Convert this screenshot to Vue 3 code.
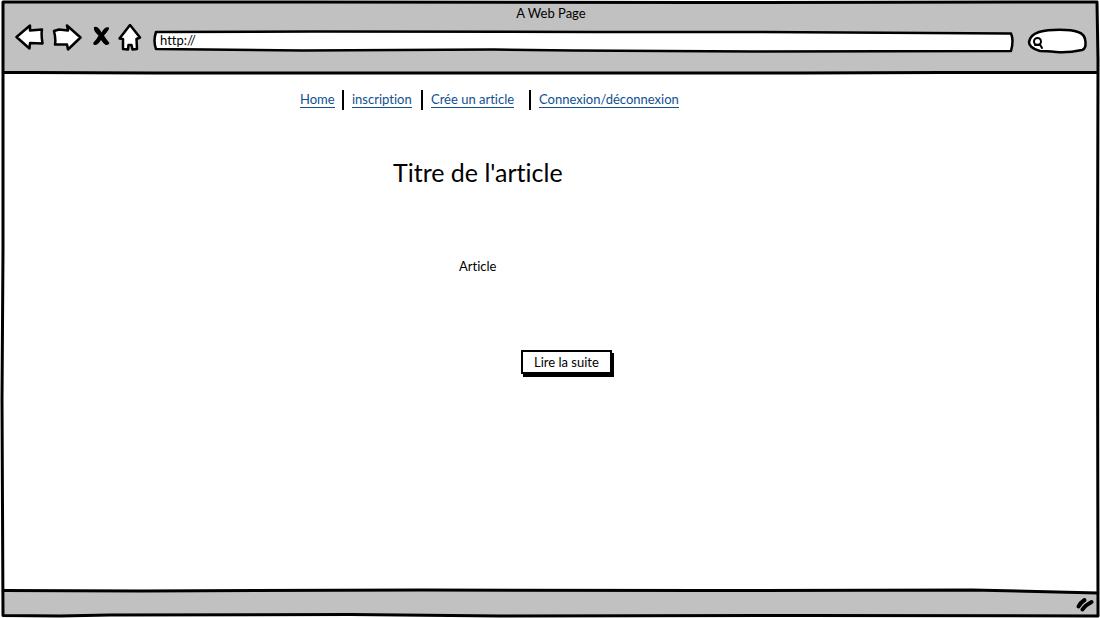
<script setup>
import { ref } from 'vue'

const address = ref('http://')
const query = ref('')
const links = ['Home', 'inscription', 'Crée un article', 'Connexion/déconnexion']
</script>

<template>
  <div class="window">
    <header class="chrome">
      <svg class="sketch" viewBox="0 0 1096 72" preserveAspectRatio="none" aria-hidden="true">
        <path d="M0 70.500 L30 70.500 L150 71 L200 71 L440 71 L600 71 L800 71 L940 70.500 L1096 70.500" />
      </svg>
      <div class="title">A Web Page</div>
      <div class="toolbar">
        <button class="tool back" type="button" aria-label="Back">
          <svg width="30" height="28" viewBox="0 0 30 28">
            <path d="M2.500 13 L16 1.500 L16 6.500 L28 5.500 Q27 10 28.500 19.500 L16 19 L15.500 24.500 Z" />
          </svg>
        </button>
        <button class="tool forward" type="button" aria-label="Forward">
          <svg width="30" height="28" viewBox="0 0 30 28">
            <path d="M2 7 L7 5.500 L16 6.500 L15 1.500 L28.500 13.500 L16 25.500 L15 20.500 L3 20.500 Q4 15 2 7 Z" />
          </svg>
        </button>
        <button class="tool stop" type="button" aria-label="Stop">
          <svg width="18" height="28" viewBox="0 0 18 28">
            <path class="blade" d="M2 3 Q6 1.500 9.500 8.500 Q13 2 17 3.500 Q18 5 12 11.500 Q14 15 17.500 19 Q16 22 13 20.500 Q11 19 9 16 Q6 21 3 21 Q.5 20.500 1.500 18.500 Q5 15 6.500 11.500 Q1 7 2 3 Z" />
          </svg>
        </button>
        <button class="tool home" type="button" aria-label="Home">
          <svg width="24" height="28" viewBox="0 0 24 28">
            <path d="M12 1 L22 13.500 L18.500 15 L19 25 L14.500 25.500 L13.500 21 L10.500 21 L10 25.500 L5 25 L5 15 L1.500 14.500 Z" />
          </svg>
        </button>
        <div class="address">
          <svg class="sketch" viewBox="0 0 860 22" preserveAspectRatio="none" aria-hidden="true">
            <path d="M3 2 L160 1.500 L440 2 L590 2 L857 3.500 Q860 10 857 21 L600 21.500 L420 20.500 L340 19.500 L150 20.500 L3 19 Q0 11 3 2 Z" />
          </svg>
          <input v-model="address" type="text" aria-label="Address" />
        </div>
        <div class="search">
          <svg class="sketch" viewBox="0 0 60 26" preserveAspectRatio="none" aria-hidden="true">
            <path d="M11 4 C22 1 42 1 50 4 Q57 6 57.500 14 Q58 21 54 22 Q40 25 28 24 Q18 23 12 23 Q1 20 1 14 Q2 7 11 4 Z" />
          </svg>
          <svg class="lens" width="14" height="14" viewBox="0 0 14 14" aria-hidden="true">
            <circle cx="7.500" cy="5.500" r="3.500" />
            <path d="M5 9 L10 8.500 L12 12" />
          </svg>
          <input v-model="query" type="text" aria-label="Search" />
        </div>
      </div>
    </header>

    <main class="page">
      <nav class="menu">
        <a v-for="link in links" :key="link" href="#">{{ link }}</a>
      </nav>
      <article class="post">
        <h1>Titre de l'article</h1>
        <p>Article</p>
        <button class="more" type="button">Lire la suite</button>
      </article>
    </main>

    <footer class="status">
      <svg class="sketch" viewBox="0 0 1096 28" preserveAspectRatio="none" aria-hidden="true">
        <path class="paper" d="M0 0 H1096 V5 L970 2 L0 2.500 Z" />
        <path d="M0 2.500 L140 3 L420 2 L700 2.500 L970 2 L1096 5" />
      </svg>
      <svg class="grip" width="20" height="20" viewBox="0 0 20 20" aria-hidden="true">
        <path d="M3.500 14.500 Q5 11 9.500 8" />
        <path d="M7.500 17.500 Q10 13.500 16.500 10" />
      </svg>
    </footer>

    <svg class="outline" viewBox="0 0 1100 618" preserveAspectRatio="none" aria-hidden="true">
      <path d="M3 2 L300 2 L700 2.500 L1097 2 L1098 60 L1097.500 300 L1098 616 L800 615.500 L500 616 L350 614.500 L110 615 L60 616 L3 615.500 L2 400 L3 250 Z" />
    </svg>
  </div>
</template>

<style>
body {
  margin: 0;
  background: #fff;
}
</style>

<style scoped>
.window {
  position: relative;
  box-sizing: border-box;
  min-height: 100vh;
  padding: 2px;
  display: flex;
  flex-direction: column;
  background: #fff;
  color: #000;
  font-family: Lato, "Liberation Sans", sans-serif;
  font-size: 13px;
  line-height: 16px;
  font-variant-ligatures: none;
}

.sketch,
.outline {
  position: absolute;
  inset: 0;
  width: 100%;
  height: 100%;
  overflow: visible;
  pointer-events: none;
}

.sketch path,
.outline path {
  fill: none;
  stroke: #000;
  stroke-width: 2.5px;
  stroke-linejoin: round;
  vector-effect: non-scaling-stroke;
}

.outline path {
  stroke-width: 3px;
}

.chrome {
  position: relative;
  box-sizing: border-box;
  padding: 3px 10px 20px 12px;
  background: #c1c1c1;
}

.chrome > .sketch path {
  stroke-width: 3px;
}

.title {
  text-align: center;
}

.toolbar {
  display: flex;
  align-items: center;
  height: 33px;
}

.tool {
  flex: none;
  padding: 0;
  border: 0;
  background: none;
  display: flex;
}

.tool path {
  fill: #fff;
  stroke: #000;
  stroke-width: 2.5px;
  stroke-linejoin: round;
}

.tool .blade {
  fill: #000;
  stroke-width: 0;
}

.forward {
  margin-left: 8px;
}

.stop {
  margin-left: 10px;
}

.home {
  margin-left: 8px;
}

.address {
  position: relative;
  flex: 1;
  height: 22px;
  margin: 6px 14px 0 11px;
}

.search {
  position: relative;
  flex: none;
  width: 60px;
  height: 26px;
  margin-top: 6px;
}

.address .sketch path,
.search .sketch path {
  fill: #fff;
}

.address input,
.search input {
  position: relative;
  box-sizing: border-box;
  display: block;
  width: 100%;
  height: 100%;
  padding: 0 7px 2px;
  border: 0;
  outline: 0;
  background: none;
  color: inherit;
  font: inherit;
}

.search input {
  padding-left: 20px;
}

.lens {
  position: absolute;
  left: 2px;
  top: 8px;
}

.lens circle,
.lens path {
  fill: none;
  stroke: #000;
  stroke-width: 2px;
  stroke-linecap: round;
}

.page {
  flex: 1;
  padding: 16px 24px 24px 298px;
}

.menu {
  display: grid;
  grid-template-columns: 52px 79px 108px auto;
  align-items: center;
  justify-items: start;
  min-height: 20px;
}

.menu a {
  position: relative;
  color: #10508f;
  text-decoration: none;
  white-space: nowrap;
  line-height: 15px;
  border-bottom: 1px solid currentColor;
}

.menu a + a::before {
  content: "";
  position: absolute;
  left: -10px;
  top: -2px;
  width: 2px;
  height: 20px;
  background: #000;
}

.post {
  display: flex;
  flex-direction: column;
  align-items: flex-start;
}

.post h1 {
  margin: 47px 0 0 93px;
  font-size: 25px;
  line-height: 30px;
  font-weight: 400;
}

.post p {
  margin: 71px 0 0 159px;
}

.more {
  margin: 76px 0 0 221px;
  padding: 2px 11px;
  border: 2px solid #000;
  background: #fff;
  box-shadow: 2px 3px 0 #000;
  color: #000;
  font: inherit;
}

.status {
  position: relative;
  display: flex;
  align-items: center;
  justify-content: flex-end;
  height: 28px;
  padding-right: 3px;
  background: #c1c1c1;
}

.status .sketch path {
  stroke-width: 3px;
}

.status .sketch .paper {
  fill: #fff;
  stroke: none;
}

.grip {
  position: relative;
}

.grip path {
  fill: none;
  stroke: #000;
  stroke-width: 4px;
  stroke-linecap: round;
}
</style>
